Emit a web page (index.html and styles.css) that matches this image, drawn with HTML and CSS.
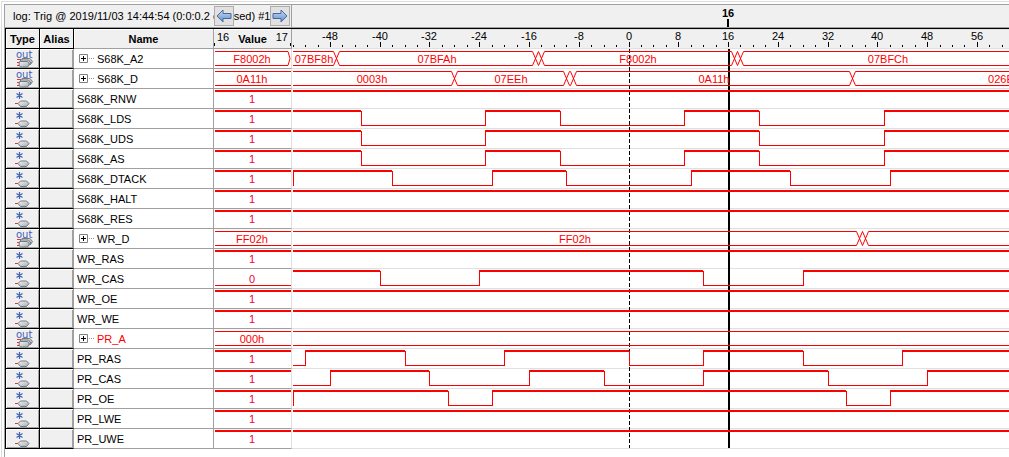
FILE: index.html
```
<!DOCTYPE html>
<html lang="en">
<head>
<meta charset="utf-8">
<title>Logic analyzer log</title>
<link rel="stylesheet" href="styles.css">
</head>
<body>
<svg class="defs" aria-hidden="true">
  <defs>
    <linearGradient id="tag" x1="0" y1="0" x2="1" y2="1"><stop offset="0" stop-color="#f4f6f8"/><stop offset="1" stop-color="#a4abb0"/></linearGradient>
    <linearGradient id="blue" x1="0" y1="0" x2="0" y2="1"><stop offset="0" stop-color="#c9dbf5"/><stop offset="1" stop-color="#5f8fd0"/></linearGradient>
    <symbol id="bus" viewBox="0 0 20 18">
      <path d="M2 9.500h4M2 12.500h3M2 15.500h3" stroke="#f03030"/>
      <path d="M7 8.500h8l2.500 3-2 3H7z" fill="url(#tag)" stroke="#727a80"/>
      <path d="M5.500 10h8l2.500 3-2 2.500H5.500z" fill="url(#tag)" stroke="#727a80"/>
      <path d="M4.500 11.500h8l2 2.500-2 3h-7l-1.500-2z" fill="url(#tag)" stroke="#727a80"/>
      <text x="1" y="8" class="out">out</text>
    </symbol>
    <symbol id="bit" viewBox="0 0 20 18">
      <path d="M4.500 2v7M1.500 3.500l6 4M7.500 3.500l-6 4" stroke="#3f62b8" stroke-width="1.200" fill="none"/>
      <path d="M0 13.500h3" stroke="#f03030"/>
      <path d="M3 13.500l2.500-2.500h6l2.500 2.500-2.500 3h-6z" fill="url(#tag)" stroke="#727a80"/>
    </symbol>
    <symbol id="plus" viewBox="0 0 16 9">
      <path d="M.5.500h8v8h-8z" fill="#fff" stroke="#808080"/>
      <path d="M2 4.500h5M4.500 2v5" stroke="#000"/>
      <path d="M10 4.500h6" stroke="#999" stroke-dasharray="1 1"/>
    </symbol>
  </defs>
</svg>
<main class="window">
  <div class="panel">
    <header class="toolbar">
      <div class="log">
        <span>log: Trig @ 2019/11/03 14:44:54 (0:0:0.2 elapsed) #1</span>
        <button class="nav prev" aria-label="Previous"><svg viewBox="0 0 16 14"><path d="M1 7l6-6v3.500h8v5H7V13z" fill="url(#blue)" stroke="#48699c"/></svg></button>
        <button class="nav next" aria-label="Next"><svg viewBox="0 0 16 14"><path d="M15 7L9 1v3.500H1v5h8V13z" fill="url(#blue)" stroke="#48699c"/></svg></button>
      </div>
      <svg class="marker"><text x="436" y="12" text-anchor="middle">16</text><path d="M435 14h2v8h-2z"/></svg>
    </header>
    <div class="content">
      <table class="signals">
        <colgroup><col class="c-type"><col class="c-alias"><col class="c-name"><col class="c-value"></colgroup>
        <thead><tr><th>Type</th><th>Alias</th><th>Name</th><th class="range"><div class="scale"><small>16</small><span>Value</span><small>17</small></div></th></tr></thead>
        <tbody>
          <tr><td><svg class="icon"><use href="#bus"/></svg></td><td></td><td><button class="tree" aria-label="Expand S68K_A2"><svg><use href="#plus"/></svg></button>S68K_A2</td><td><div class="value bus">F8002h</div><svg class="edge"><path d="M0 2.500h1l2 7-2 7H0" fill="#fff" stroke="#f00"/></svg></td></tr>
          <tr><td><svg class="icon"><use href="#bus"/></svg></td><td></td><td><button class="tree" aria-label="Expand S68K_D"><svg><use href="#plus"/></svg></button>S68K_D</td><td><div class="value bus">0A11h</div></td></tr>
          <tr><td><svg class="icon"><use href="#bit"/></svg></td><td></td><td>S68K_RNW</td><td><div class="value high">1</div></td></tr>
          <tr><td><svg class="icon"><use href="#bit"/></svg></td><td></td><td>S68K_LDS</td><td><div class="value high">1</div></td></tr>
          <tr><td><svg class="icon"><use href="#bit"/></svg></td><td></td><td>S68K_UDS</td><td><div class="value high">1</div></td></tr>
          <tr><td><svg class="icon"><use href="#bit"/></svg></td><td></td><td>S68K_AS</td><td><div class="value high">1</div></td></tr>
          <tr><td><svg class="icon"><use href="#bit"/></svg></td><td></td><td>S68K_DTACK</td><td><div class="value high">1</div></td></tr>
          <tr><td><svg class="icon"><use href="#bit"/></svg></td><td></td><td>S68K_HALT</td><td><div class="value high">1</div></td></tr>
          <tr><td><svg class="icon"><use href="#bit"/></svg></td><td></td><td>S68K_RES</td><td><div class="value high">1</div></td></tr>
          <tr><td><svg class="icon"><use href="#bus"/></svg></td><td></td><td><button class="tree" aria-label="Expand WR_D"><svg><use href="#plus"/></svg></button>WR_D</td><td><div class="value bus">FF02h</div></td></tr>
          <tr><td><svg class="icon"><use href="#bit"/></svg></td><td></td><td>WR_RAS</td><td><div class="value high">1</div></td></tr>
          <tr><td><svg class="icon"><use href="#bit"/></svg></td><td></td><td>WR_CAS</td><td><div class="value low">0</div></td></tr>
          <tr><td><svg class="icon"><use href="#bit"/></svg></td><td></td><td>WR_OE</td><td><div class="value high">1</div></td></tr>
          <tr><td><svg class="icon"><use href="#bit"/></svg></td><td></td><td>WR_WE</td><td><div class="value high">1</div></td></tr>
          <tr><td><svg class="icon"><use href="#bus"/></svg></td><td></td><td class="alert"><button class="tree" aria-label="Expand PR_A"><svg><use href="#plus"/></svg></button>PR_A</td><td><div class="value bus">000h</div></td></tr>
          <tr><td><svg class="icon"><use href="#bit"/></svg></td><td></td><td>PR_RAS</td><td><div class="value high">1</div></td></tr>
          <tr><td><svg class="icon"><use href="#bit"/></svg></td><td></td><td>PR_CAS</td><td><div class="value high">1</div></td></tr>
          <tr><td><svg class="icon"><use href="#bit"/></svg></td><td></td><td>PR_OE</td><td><div class="value high">1</div></td></tr>
          <tr><td><svg class="icon"><use href="#bit"/></svg></td><td></td><td>PR_LWE</td><td><div class="value high">1</div></td></tr>
          <tr><td><svg class="icon"><use href="#bit"/></svg></td><td></td><td>PR_UWE</td><td><div class="value high">1</div></td></tr>
        </tbody>
      </table>
      <svg class="plot" id="plot" role="img" aria-label="Waveforms"></svg>
    </div>
  </div>
</main>
<script src="script.js"></script>
</body>
</html>
```
FILE: styles.css
```
* { box-sizing: border-box; }
body {
  margin: 0;
  background: #fff;
  color: #000;
  font: 11px/14px "Liberation Sans", Arial, sans-serif;
}
button { padding: 0; font: inherit; }
.defs { position: absolute; width: 0; height: 0; }
.window {
  margin: 1px 0 0 1px;
  padding: 2px 0 0 2px;
  min-height: calc(100vh - 1px);
  border: solid #dcdcdc;
  border-width: 1px 0 0 1px;
  display: flex;
}
.panel {
  flex: 1;
  min-width: 0;
  border: solid #a0a0a0;
  border-width: 1px 0 0 1px;
}
.toolbar {
  display: flex;
  height: 24px;
  background: #f0f0f0;
  border-bottom: 1px solid #000;
  box-shadow: inset 0 -1px #a0a0a0;
}
.log {
  position: relative;
  flex: none;
  width: 287px;
  padding: 4px 0 0 8px;
  border-right: 1px solid #a0a0a0;
  white-space: nowrap;
}
.nav {
  position: absolute;
  top: 1px;
  width: 20px;
  height: 20px;
  display: grid;
  place-items: center;
  background: #e1e1e1;
  border: 1px solid #adadad;
}
.nav svg { width: 16px; height: 14px; }
.prev { right: 57px; }
.next { right: 1px; }
.marker { flex: 1; min-width: 0; height: 23px; font-weight: bold; font-size: 11px; }
.content { display: flex; }

.signals {
  flex: none;
  width: 287px;
  table-layout: fixed;
  border-collapse: separate;
  border-spacing: 0;
}
.c-type { width: 35px; }
.c-alias { width: 34px; }
.c-name { width: 140px; }
.c-value { width: 78px; }
.signals tr { height: 20px; }
.signals th, .signals td {
  height: 20px;
  padding: 0;
  border: solid #a0a0a0;
  border-width: 0 1px 1px 0;
}
.signals th {
  background: #f0f0f0;
  box-shadow: inset 1px 1px #fff;
}
.signals th:nth-child(1), .signals th:nth-child(2) { border-color: #000; }
.signals td:nth-child(1), .signals td:nth-child(2) {
  background: #f0f0f0;
  border-color: #000;
  box-shadow: inset 1px 1px #fff, inset -1px -1px #a0a0a0;
}
.signals th:first-child, .signals td:first-child { border-left: 1px solid #000; }
.signals td:nth-child(2) { border-right-color: #a0a0a0; }
.signals td:nth-child(3) { padding-left: 3px; }
.signals td:nth-child(4) { position: relative; border-right-color: #e0e0e0; vertical-align: top; }
.signals .alert { color: #f00; }
.icon { display: block; width: 20px; height: 18px; margin-left: 9px; }
.out { font: 10px "DejaVu Sans", sans-serif; fill: #3f62b8; }
.tree {
  width: 16px;
  height: 9px;
  margin: 0 2px;
  background: none;
  border: 0;
}
.tree svg { display: block; width: 16px; height: 9px; }
.scale { display: flex; justify-content: space-between; padding: 0 2px; border: solid #000; border-width: 0 1px; border-image: linear-gradient(#f0f0f0 75%, #000 75%) 1; }
.scale small { font-size: 11px; font-weight: normal; line-height: 10px; }
.value {
  height: 17px;
  margin-left: 1px;
  padding-right: 2px;
  line-height: 14px;
  color: #f0003c;
  text-align: center;
  border: 0 solid #f00;
}
.bus { height: 15px; margin-top: 2px; border-width: 1px 0; color: #f00; }
.high { height: 16px; margin-top: 1px; border-top-width: 2px; }
.low { padding-top: 3px; border-bottom-width: 1px; }
.edge { position: absolute; top: 0; right: 0; width: 4px; height: 19px; background: #fff; }

.plot { flex: 1; min-width: 0; height: 420px; display: block; }
.axis-bg { fill: #f0f0f0; }
.rule { fill: #e0e0e0; }
.tick, .cursor { fill: #000; }
.origin { stroke: #000; stroke-dasharray: 4 2; }
.wave { fill: none; stroke: #f00; }
.strong { fill: #f00; }
.tag { fill: #f00; text-anchor: middle; }
.num { text-anchor: middle; }
```
FILE: script.js
```
const plot = document.getElementById("plot");
const NS = "http://www.w3.org/2000/svg";
const ORIGIN = 337, STEP = 6.22;
const px = t => Math.floor(ORIGIN + t * STEP);

function add(name, attrs, text) {
  const el = document.createElementNS(NS, name);
  for (const key in attrs) el.setAttribute(key, attrs[key]);
  if (text !== undefined) el.textContent = text;
  plot.append(el);
}
const rect = (cls, x, y, width, height) => add("rect", { class: cls, x, y, width, height });

// Bits: level at the left edge, then the times at which it toggles.
// Buses: times at which the value changes, then labels as [centre, text].
const rows = [
  { bus: [-47, -15, -14, 17, 18], tags: [[22, "07BF8h"], [145, "07BFAh"], [346, "F8002h"], [596, "07BFCh"]] },
  { bus: [-28, -10, -9, 36], tags: [[80, "0003h"], [219, "07EEh"], [422, "0A11h"], [712, "026Eh"]] },
  { level: 1, at: [] },
  { level: 1, at: [-43, -23, -11, 9, 21, 41] },
  { level: 1, at: [-43, -23, 21, 41] },
  { level: 1, at: [-43, -23, -11, 9, 21, 41] },
  { level: 0, at: [-54, -38, -22, -10, 10, 26, 42] },
  { level: 1, at: [] },
  { level: 1, at: [] },
  { bus: [37, 38], tags: [[283, "FF02h"]] },
  { level: 1, at: [] },
  { level: 1, at: [-40, -24, 12, 28] },
  { level: 1, at: [] },
  { level: 1, at: [] },
  { bus: [], tags: [] },
  { level: 0, at: [-52, -36, -20, 0, 12, 28, 44] },
  { level: 0, at: [-48, -32, -16, -4, 12, 32, 48] },
  { level: 0, at: [-54, -29, -22, 35, 42] },
  { level: 1, at: [] },
  { level: 1, at: [] }
];

function draw() {
  const end = plot.getBoundingClientRect().width;
  plot.replaceChildren();
  rect("axis-bg", 0, 0, end, 19);
  rect("rule", 0, 0, end, 1);
  for (let t = -54; px(t) < end; t += 2) {
    const major = t % 8 === 0;
    rect("tick", px(t), major ? 13 : 16, 1, major ? 5 : 2);
    if (major && px(t) + 8 < end) add("text", { class: "num", x: px(t), y: 11 }, t);
  }
  for (let i = 0; i <= rows.length; i++) rect("rule", 0, 19 + 20 * i, end, 1);
  add("path", { class: "origin", d: `M${px(0) + 0.5} 20V419` });
  rect("cursor", px(16), 20, 2, 399);
  rows.forEach((row, i) => (row.bus ? drawBus : drawBit)(row, 20 + 20 * i, end));
}

function drawBus(row, y, end) {
  const top = y + 2.5, bottom = y + 16.5;
  let x = 1, d = "";
  for (const t of row.bus) {
    const c = px(t) + 0.5;
    if (c + 3 > end) break;
    if (c - 3 > x) d += `M${x} ${top}H${c - 3}M${x} ${bottom}H${c - 3}`;
    d += `M${c - 3} ${top}L${c + 3} ${bottom}M${c - 3} ${bottom}L${c + 3} ${top}`;
    x = c + 3;
  }
  d += `M${x} ${top}H${end}M${x} ${bottom}H${end}`;
  add("path", { class: "wave", d });
  for (const [c, text] of row.tags) {
    if (c - 14 < end) add("text", { class: "tag", x: c, y: y + 14 }, text);
  }
}

function drawBit(row, y, end) {
  let x = 1, level = row.level;
  for (const edge of [...row.at.map(px).filter(v => v < end), end]) {
    if (level) rect("strong", x, y + 1, edge - x, 2);
    else rect("strong", x, y + 16, edge - x, 1);
    if (edge < end) rect("strong", edge, y + 2, 1, 15);
    x = edge;
    level = 1 - level;
  }
}

draw();
addEventListener("resize", draw);
```
